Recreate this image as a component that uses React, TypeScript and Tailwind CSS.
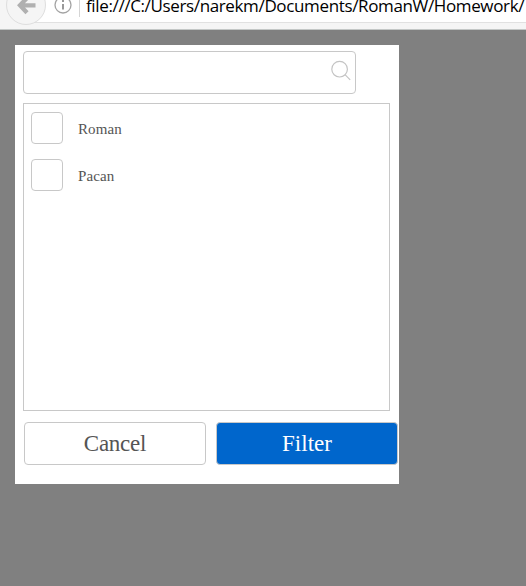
import React from 'react';

function AddressBar() {
  return (
    <header className="relative h-[30px] overflow-hidden border-b border-[#c3c7c6] bg-[#f5f5f5]">
      <div className="flex h-[23px] border-b border-[#e1e1e1] bg-white pl-[54px]">
        <svg className="h-[14px] w-[18px] shrink-0" viewBox="0 0 18 14" fill="none">
          <circle cx="9" cy="5" r="8" stroke="#a3a3a3" strokeWidth="1.3" />
          <path d="M9 4v5.5" stroke="#999999" strokeWidth="2" />
          <path d="M9 0v2" stroke="#999999" strokeWidth="2" />
        </svg>
        <div className="ml-[7px] h-[17px] w-px shrink-0 bg-[#d5d5d5]" />
        <span className="-mt-[6px] ml-[6px] whitespace-nowrap font-['Open_Sans',sans-serif] text-[17px] leading-6 tracking-[-0.36px] text-black">
          file:///C:/Users/narekm/Documents/RomanW/Homework/
        </span>
      </div>
      <svg className="absolute left-0 top-0" width="54" height="29" viewBox="0 0 54 29" fill="none">
        <path d="M0 0h34v23H0z" fill="#f5f5f5" />
        <circle cx="26" cy="5" r="19.5" fill="#f5f5f5" stroke="#dedede" />
        <path d="M27 -2L20 5.3L27 12.7M20.5 5.3H35.5" stroke="#b0b0b0" strokeWidth="4.3" />
      </svg>
    </header>
  );
}

function Option({ label }: { label: string }) {
  return (
    <label className="flex h-8 items-center gap-[15px]">
      <input type="checkbox" className="size-8 appearance-none rounded border border-[#c8c8c8] bg-white" />
      <span className="pt-[2px] text-[15px] leading-5 tracking-[0.1px]">{label}</span>
    </label>
  );
}

export default function App() {
  return (
    <div className="h-[586px] w-[526px] overflow-hidden bg-[#808080]">
      <AddressBar />
      <main className="ml-[15px] mt-[15px] h-[439px] w-[384px] bg-white pl-2 pt-[6px] font-['Liberation_Serif',serif] text-[#555555]">
        <div className="flex h-[43px] w-[333px] rounded border border-[#c8c8c8]">
          <input type="text" aria-label="Search" className="min-w-0 flex-1 bg-transparent px-2 outline-none" />
          <svg className="mr-[3px] mt-[8px] size-[22px]" viewBox="0 0 22 22" fill="none" stroke="#c4c4c4" strokeWidth="1.2">
            <circle cx="9.6" cy="9.2" r="7.8" />
            <path d="M15 14.6l5.2 5.2" />
          </svg>
        </div>
        <div className="mt-[9px] flex h-[308px] w-[367px] flex-col gap-[15px] border border-[#c8c8c8] pl-[7px] pt-2">
          <Option label="Roman" />
          <Option label="Pacan" />
        </div>
        <div className="ml-px mt-[11px] flex gap-[10px] text-[23px]">
          <button className="h-[43px] w-[182px] rounded border border-[#c8c8c8] bg-white pt-[2px] tracking-[-0.25px]">Cancel</button>
          <button className="h-[43px] w-[182px] rounded border border-[#c8c8c8] bg-[#0066cc] pt-[2px] text-white">Filter</button>
        </div>
      </main>
    </div>
  );
}
